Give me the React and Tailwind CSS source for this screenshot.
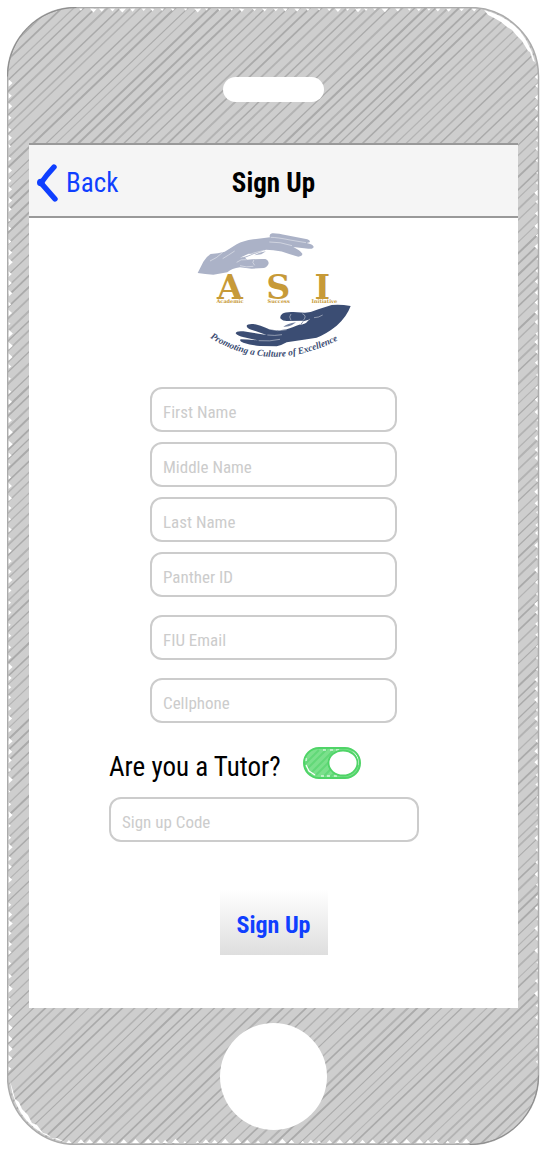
import { useState } from "react";

const FIELDS = [
  { id: "first-name", label: "First Name", type: "text" },
  { id: "middle-name", label: "Middle Name", type: "text" },
  { id: "last-name", label: "Last Name", type: "text" },
  { id: "panther-id", label: "Panther ID", type: "text" },
];

const CONTACT_FIELDS = [
  { id: "email", label: "FIU Email", type: "email" },
  { id: "cellphone", label: "Cellphone", type: "tel" },
];

const noise = (n) => {
  const v = Math.sin(n * 12.9898) * 43758.5453;
  return v - Math.floor(v);
};

const HATCH = Array.from({ length: 154 }, (_, i) => ({
  at: i * 10.8 + noise(i) * 3,
  width: 1 + noise(i + 300) * 1.1,
  shade: noise(i + 700) > 0.5 ? "#aaaaaa" : "#b3b3b3",
}));

const notches = (from, to, seed, draw) => {
  let path = "";
  for (let p = from, i = seed; p < to; p += 8 + noise(i) * 5, i += 1) {
    const half = 1.6 + noise(i + 50) * 2.4;
    path += draw(p, half, half + 0.4);
  }
  return path;
};

const EDGE_NOTCHES =
  notches(74, 470, 1, (p, h, d) => `M${p - h} 1.5h${2 * h}l${-h} ${d}z`) +
  notches(62, 465, 90, (p, h, d) => `M${p - h} 1136h${2 * h}l${-h} ${-d}z`) +
  notches(76, 1066, 180, (p, h, d) => `M1.5 ${p - h}v${2 * h}l${d} ${-h}z`) +
  notches(70, 1060, 400, (p, h, d) => `M532.5 ${p - h}v${2 * h}l${-d} ${-h}z`);

function PhoneBody() {
  return (
    <svg
      className="absolute inset-0 h-full w-full"
      viewBox="0 0 534 1138"
      preserveAspectRatio="none"
      aria-hidden="true"
    >
      <defs>
        <clipPath id="body">
          <rect x="0.5" y="0.5" width="532" height="1137" rx="69" />
        </clipPath>
      </defs>
      <g clipPath="url(#body)">
        <rect width="534" height="1138" fill="#cecece" />
        {HATCH.map((line) => (
          <path
            key={line.at}
            d={`M-2 ${line.at}L536 ${line.at - 512}`}
            stroke={line.shade}
            strokeWidth={line.width}
          />
        ))}
        <path d={EDGE_NOTCHES} fill="#fff" />
        <path
          d="M478 3Q500 9 514 24Q528 42 531 66L529 55 527 54 524 45 522 44 516 34 511 29 506 23 501 20 495 15 488 11 482 8z"
          fill="#fff"
        />
        <path
          d="M3 1074Q6 1098 20 1114Q35 1130 58 1135L50 1131 46 1132 40 1127 36 1126 30 1118 25 1116 21 1108 15 1102 12 1095 8 1092 6 1084z"
          fill="#fff"
        />
      </g>
      <rect x="0.5" y="0.5" width="532" height="1137" rx="69" fill="none" stroke="#ababab" strokeWidth="1.5" />
      <path d="M0.5 69.5A69 69 0 0 1 69.5 .5M532.5 1068.5A69 69 0 0 1 463.5 1137.5" fill="none" stroke="#8c8c8c" />
    </svg>
  );
}

function Logo() {
  return (
    <svg className="h-[140px] w-[170px] self-center" viewBox="-3 0 510 420" role="img" aria-label="Academic Success Initiative">
      <defs>
        <path id="motto-curve" d="M60 338Q236 450 450 343" />
      </defs>
      <path
        fill="#abb2c7"
        d="M23 144L40 110Q50 94 62 87Q84 86 104 80L140 58Q160 47 190 43L240 37Q236 28 246 25Q262 24 290 31L352 43Q362 46 359 52L350 54Q368 58 371 65Q370 73 355 71L310 66Q330 76 337 86Q338 94 325 95L300 88Q275 78 250 76L228 74Q200 84 165 98L172 104Q205 101 226 102Q236 106 236 115Q234 125 222 129L185 131L150 127Q125 130 112 142L70 149Q45 147 23 144Z"
      />
      <path
        d="M160 96Q190 82 222 76M242 37Q262 37 300 45L348 53M238 51Q270 50 306 62M140 112Q152 101 170 104M150 122Q168 128 190 124M192 104Q184 112 194 121M98 82Q80 100 60 108M134 78Q116 90 98 101"
        fill="none"
        stroke="#fff"
        strokeWidth="2"
        opacity=".65"
      />
      <path d="M150 98L176 86 186 87 168 94zM193 92L215 83 232 80 216 89 200 94z" fill="#fff" />
      <path d="M193 91Q206 82 228 79L214 88z" fill="#abb2c7" />
      <path
        fill="#3b4d73"
        d="M482 243Q450 237 425 240L385 253Q366 262 345 263L310 261Q286 260 277 266Q268 274 272 281Q278 288 290 288L340 287L332 298Q318 302 308 307Q290 315 270 316Q252 316 236 312Q208 300 190 297Q172 296 170 302Q170 309 184 314L230 330Q190 324 160 319Q138 317 137 325Q142 333 162 337L204 346Q172 344 152 343Q146 348 160 353Q184 361 210 363L260 364Q277 360 290 352Q340 344 380 338Q410 326 440 302Q470 276 482 243Z"
      />
      <path
        d="M303 267Q295 275 303 286M337 266Q352 272 340 286M330 299Q346 296 360 282M232 330Q254 333 276 329M206 347Q240 350 270 343M236 312Q262 321 290 314M372 278Q386 278 398 270"
        fill="none"
        stroke="#fff"
        strokeWidth="2"
        opacity=".65"
      />
      <path d="M280 305Q292 296 318 292L306 300Q296 306 280 305z" fill="#7482a0" />
      <path d="M340 289L356 284 348 294 334 299z" fill="#fff" />
      <g className="font-['DejaVu_Serif']" fill="#c79a38" fontWeight="700" textAnchor="middle">
        <text x="120" y="221" fontSize="100">A</text>
        <text x="265" y="221" fontSize="100">S</text>
        <text x="397" y="221" fontSize="100">I</text>
        <text x="120" y="235" fontSize="15">Academic</text>
        <text x="266" y="235" fontSize="15">Success</text>
        <text x="403" y="235" fontSize="15">Initiative</text>
      </g>
      <text
        className="font-['Liberation_Serif']"
        fill="#3b4d73"
        fontSize="28"
        fontStyle="italic"
        fontWeight="700"
      >
        <textPath href="#motto-curve">Promoting a Culture of Excellence</textPath>
      </text>
    </svg>
  );
}

function Field({ id, label, type, wide }) {
  return (
    <input
      id={id}
      name={id}
      type={type}
      aria-label={label}
      placeholder={label}
      className={`h-[45px] max-w-full rounded-xl border-2 border-[#cccccc] bg-white px-[11px] pt-1 text-[17px] text-black placeholder:text-[#cccccc] ${
        wide ? "w-[310px]" : "w-[247px] self-center"
      }`}
    />
  );
}

function Toggle({ id, checked, onChange }) {
  return (
    <span className="relative inline-flex">
      <input
        id={id}
        type="checkbox"
        checked={checked}
        onChange={onChange}
        className="absolute inset-0 h-full w-full cursor-pointer opacity-0"
      />
      <svg className="h-8 w-[58px]" viewBox="0 0 58 32" aria-hidden="true">
        <defs>
          <clipPath id="toggle-track">
            <rect x="1" y="1" width="56" height="30" rx="15" />
          </clipPath>
        </defs>
        <rect x="1" y="1" width="56" height="30" rx="15" fill={checked ? "#7be08c" : "#e5e5e5"} />
        {checked && (
          <g clipPath="url(#toggle-track)">
            <path
              d="M1 18L16 3M2 24L24 2M7 27L30 4M13 28L33 8M21 29L34 16M27 30L36 22"
              stroke="#62d878"
              strokeWidth="2"
            />
            <path
              d="M3 18L6 24 12 28M18 29h3M24 29h3M31 29h3M20 3h3M27 3h3M33 3h3M50 4Q56 9 55 18M3 11v3"
              fill="none"
              stroke="#fff"
              strokeWidth="1.2"
            />
          </g>
        )}
        <rect x="1" y="1" width="56" height="30" rx="15" fill="none" stroke={checked ? "#4fd467" : "#cccccc"} strokeWidth="2" />
        <ellipse
          cx={checked ? 40 : 17}
          cy="16"
          rx="14.5"
          ry="12.5"
          fill="#fff"
          stroke={checked ? "#4fd467" : "#cccccc"}
          strokeWidth="1.8"
        />
      </svg>
    </span>
  );
}

export default function App() {
  const [tutor, setTutor] = useState(true);

  return (
    <div className="bg-white py-[7px] pr-[9px] pl-[7px] font-['Roboto_Condensed','Liberation_Sans_Narrow','Liberation_Sans',sans-serif]">
      <div className="relative mx-auto flex max-w-[534px] flex-col items-center px-[22px] pt-[70px] pb-[15px]">
        <PhoneBody />
        <div className="relative h-[25px] w-[101px] rounded-full bg-white" />

        <div className="relative mt-[41px] w-full bg-white pb-[53px]">
          <header className="grid h-[75px] grid-cols-[1fr_auto_1fr] items-center border-y-2 border-[#999999] bg-[#f5f5f5] pt-1">
            <a href="#back" className="flex items-center gap-2 pl-2 text-[27px] leading-8 text-[#0f3fff]">
              <svg className="h-[38px] w-[21px]" viewBox="0 0 21 38" fill="none" aria-hidden="true">
                <path d="M17 3L10 11 4 19 11 27 18 35" stroke="currentColor" strokeWidth="5.4" strokeLinecap="round" strokeLinejoin="round" />
                <circle cx="3.8" cy="18.5" r="3.8" fill="currentColor" />
              </svg>
              Back
            </a>
            <h1 className="text-[27px] leading-8 font-bold text-black">Sign Up</h1>
          </header>

          <form className="flex flex-col px-20 pt-[7px]" onSubmit={(e) => e.preventDefault()}>
            <Logo />

            <div className="mt-[22px] flex flex-col gap-[10px]">
              {FIELDS.map((field) => (
                <Field key={field.id} {...field} />
              ))}
            </div>
            <div className="mt-[18px] flex flex-col gap-[18px]">
              {CONTACT_FIELDS.map((field) => (
                <Field key={field.id} {...field} />
              ))}
            </div>

            <div className="mt-6 flex items-start gap-[22px]">
              <label htmlFor="tutor" className="pt-1 text-[27px] leading-8 text-black">
                Are you a Tutor?
              </label>
              <Toggle id="tutor" checked={tutor} onChange={(e) => setTutor(e.target.checked)} />
            </div>

            <div className="mt-[14px] flex flex-col">
              <Field id="code" label="Sign up Code" type="text" wide />
            </div>

            <button
              type="submit"
              className="mt-12 h-[65px] w-[108px] self-center bg-linear-to-b from-white to-[#dedede] pt-1 text-[24px] font-bold text-[#0f3fff]"
            >
              Sign Up
            </button>
          </form>
        </div>

        <button type="button" aria-label="Home" className="relative mt-[15px] size-[107px] rounded-full bg-white" />
      </div>
    </div>
  );
}
